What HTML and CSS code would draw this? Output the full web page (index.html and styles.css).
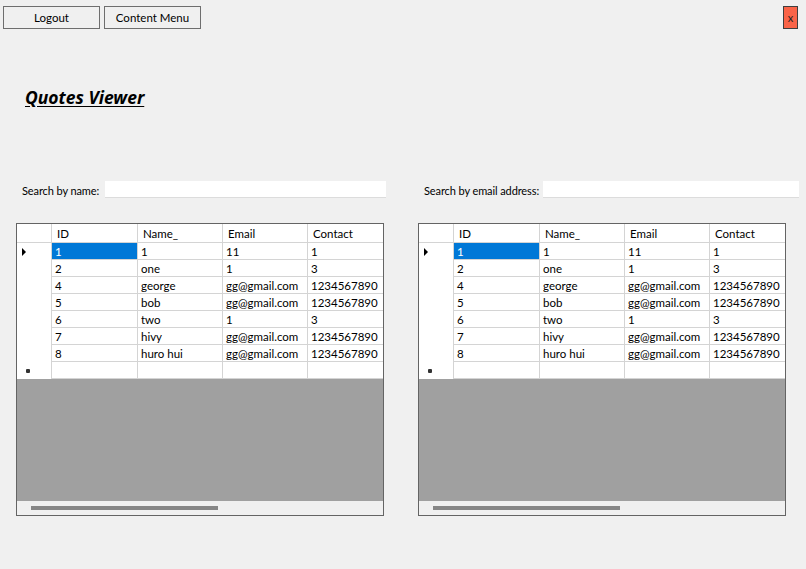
FILE: index.html
```html
<!DOCTYPE html>
<html>
<head>
<meta charset="utf-8">
<title>Quotes Viewer</title>
<link rel="stylesheet" href="styles.css">
</head>
<body>
<div class="topbar">
  <button class="btn">Logout</button>
  <button class="btn">Content Menu</button>
  <button class="close">x</button>
</div>
<h1 class="title">Quotes Viewer</h1>
<div class="panels">
  <section class="panel">
    <div class="search search-name">
      <label>Search by name:</label>
      <div class="textbox"></div>
    </div>
    <div class="dgv">
      <div class="rows">
        <div class="row head"><div class="rh"></div><div class="c">ID</div><div class="c">Name_</div><div class="c">Email</div><div class="c">Contact</div></div>
        <div class="row"><div class="rh"><span class="arrow"></span></div><div class="c sel">1</div><div class="c">1</div><div class="c">11</div><div class="c">1</div></div>
        <div class="row"><div class="rh"></div><div class="c">2</div><div class="c">one</div><div class="c">1</div><div class="c">3</div></div>
        <div class="row"><div class="rh"></div><div class="c">4</div><div class="c">george</div><div class="c">gg@gmail.com</div><div class="c">1234567890</div></div>
        <div class="row"><div class="rh"></div><div class="c">5</div><div class="c">bob</div><div class="c">gg@gmail.com</div><div class="c">1234567890</div></div>
        <div class="row"><div class="rh"></div><div class="c">6</div><div class="c">two</div><div class="c">1</div><div class="c">3</div></div>
        <div class="row"><div class="rh"></div><div class="c">7</div><div class="c">hivy</div><div class="c">gg@gmail.com</div><div class="c">1234567890</div></div>
        <div class="row"><div class="rh"></div><div class="c">8</div><div class="c">huro hui</div><div class="c">gg@gmail.com</div><div class="c">1234567890</div></div>
        <div class="row newrow"><div class="rh"><span class="star"></span></div><div class="c"></div><div class="c"></div><div class="c"></div><div class="c"></div></div>
      </div>
      <div class="hscroll"><div class="thumb"></div></div>
    </div>
  </section>
  <section class="panel">
    <div class="search search-email">
      <label>Search by email address:</label>
      <div class="textbox"></div>
    </div>
    <div class="dgv">
      <div class="rows">
        <div class="row head"><div class="rh"></div><div class="c">ID</div><div class="c">Name_</div><div class="c">Email</div><div class="c">Contact</div></div>
        <div class="row"><div class="rh"><span class="arrow"></span></div><div class="c sel">1</div><div class="c">1</div><div class="c">11</div><div class="c">1</div></div>
        <div class="row"><div class="rh"></div><div class="c">2</div><div class="c">one</div><div class="c">1</div><div class="c">3</div></div>
        <div class="row"><div class="rh"></div><div class="c">4</div><div class="c">george</div><div class="c">gg@gmail.com</div><div class="c">1234567890</div></div>
        <div class="row"><div class="rh"></div><div class="c">5</div><div class="c">bob</div><div class="c">gg@gmail.com</div><div class="c">1234567890</div></div>
        <div class="row"><div class="rh"></div><div class="c">6</div><div class="c">two</div><div class="c">1</div><div class="c">3</div></div>
        <div class="row"><div class="rh"></div><div class="c">7</div><div class="c">hivy</div><div class="c">gg@gmail.com</div><div class="c">1234567890</div></div>
        <div class="row"><div class="rh"></div><div class="c">8</div><div class="c">huro hui</div><div class="c">gg@gmail.com</div><div class="c">1234567890</div></div>
        <div class="row newrow"><div class="rh"><span class="star"></span></div><div class="c"></div><div class="c"></div><div class="c"></div><div class="c"></div></div>
      </div>
      <div class="hscroll"><div class="thumb"></div></div>
    </div>
  </section>
</div>
</body>
</html>
```
FILE: styles.css
```css
* { box-sizing: border-box; }
html, body { margin: 0; padding: 0; }
body {
  background: #f0f0f0;
  font-family: Lato, "Noto Sans", "DejaVu Sans", sans-serif;
  font-size: 11.5px;
  color: #000;
  width: 806px;
  height: 569px;
  overflow: hidden;
}
.topbar {
  display: flex;
  gap: 4px;
  padding: 6px 8px 0 3px;
  height: 29px;
}
.btn {
  width: 97px;
  height: 23px;
  background: #f0f0f0;
  border: 1px solid #6e6e6e;
  font: inherit;
  color: #000;
  padding: 0;
}
.close {
  margin-left: auto;
  width: 15px;
  height: 23px;
  padding: 0;
  background: #fa6448;
  border: 1px solid #3f3f3f;
  font: inherit;
  font-size: 11px;
  color: #222;
}
.title {
  margin: 56px 0 0 25px;
  font-family: "Noto Sans", "DejaVu Sans", sans-serif;
  font-size: 17.5px;
  line-height: 24px;
  font-weight: bold;
  font-style: italic;
  text-decoration: underline;
  text-underline-offset: 2px;
  height: 24px;
}
.panels {
  display: grid;
  grid-template-columns: 402px 388px;
  margin-top: 71px;
  padding-left: 16px;
}
.search {
  display: grid;
  align-items: center;
  height: 18px;
  padding-left: 6px;
  margin-bottom: 25px;
}
.search-name { grid-template-columns: 83px 281px; }
.search-email { grid-template-columns: 119px 256px; }
.search label {
  white-space: nowrap;
  font-size: 11px;
  letter-spacing: -0.1px;
  padding-top: 2px;
}
.textbox {
  height: 17px;
  background: #fff;
  border-bottom: 1px solid #dcdcdc;
}
.dgv {
  width: 368px;
  height: 293px;
  border: 1px solid #646464;
  background: #a0a0a0;
  display: flex;
  flex-direction: column;
}
.rows {
  flex: 1;
  overflow: hidden;
}
.row {
  display: grid;
  grid-template-columns: 35px 86px 85px 85px 85px;
  width: 376px;
  height: 17px;
  background: #fff;
}
.row.head { height: 19px; }
.rh, .c {
  border-right: 1px solid #d4d4d4;
  white-space: nowrap;
  overflow: hidden;
  line-height: 16px;
}
.c {
  border-bottom: 1px solid #d4d4d4;
  padding: 1px 0 0 3px;
}
.head .c, .head .rh {
  border-bottom: 1px solid #d4d4d4;
  line-height: 18px;
  padding: 1px 0 0 5px;
}
.c.sel {
  background: #0078d7;
  color: #fff;
}
.rh {
  position: relative;
}
.arrow {
  position: absolute;
  left: 5px;
  top: 5px;
  width: 0;
  height: 0;
  border-top: 4px solid transparent;
  border-bottom: 4px solid transparent;
  border-left: 4px solid #000;
}
.star {
  position: absolute;
  left: 9px;
  top: 7px;
  width: 4px;
  height: 4px;
  background: #333;
  border-radius: 1px;
}
.hscroll {
  height: 14px;
  background: #f0f0f0;
  padding: 5px 0 0 14px;
}
.thumb {
  width: 187px;
  height: 4px;
  background: #868686;
}
```
